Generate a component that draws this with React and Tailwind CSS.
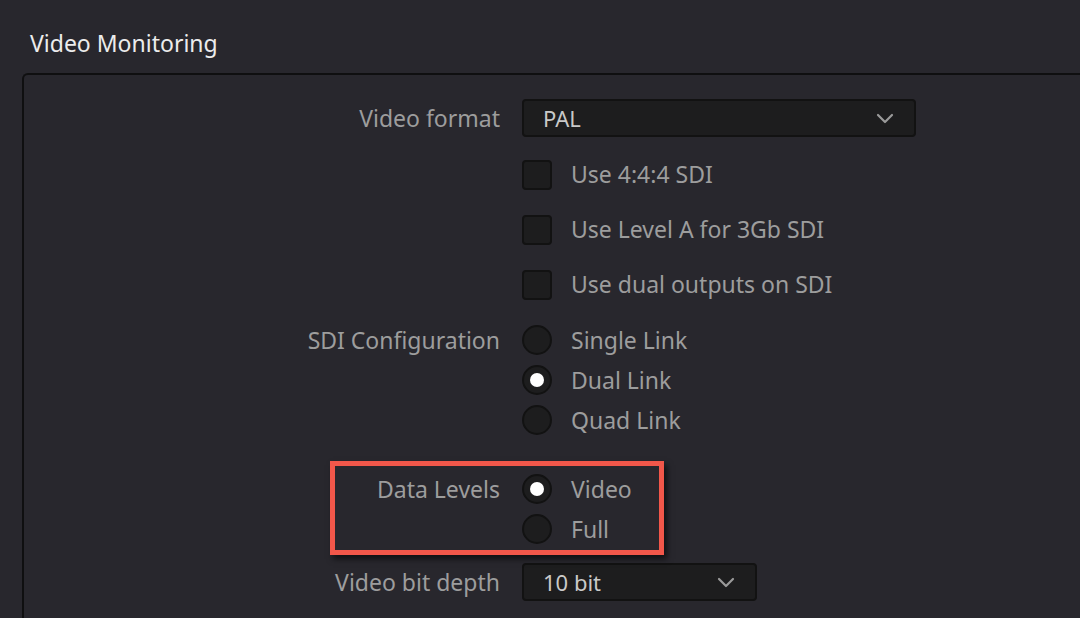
import React from "react";

function Chevron() {
  return (
    <svg width="18" height="11" viewBox="0 0 18 11" fill="none">
      <path d="M2 2 L9 9 L16 2" stroke="#9a9a9a" strokeWidth="2.2" strokeLinecap="round" strokeLinejoin="round" />
    </svg>
  );
}

function Dropdown({ value, width }) {
  return (
    <div
      className={`flex h-[38px] items-center justify-between rounded-[4px] border-2 border-[#121212] bg-[#1d1d1e] pl-[19px] pr-[20px] text-[22px] text-[#c9c9c9] ${width}`}
    >
      <span>{value}</span>
      <Chevron />
    </div>
  );
}

function Checkbox() {
  return <div className="h-[30px] w-[30px] shrink-0 rounded-[4px] border-2 border-[#121212] bg-[#1d1d1e]" />;
}

function Radio({ checked }) {
  return (
    <div className="flex h-[30px] w-[30px] shrink-0 items-center justify-center rounded-full border-2 border-[#121212] bg-[#1d1d1e]">
      {checked && <div className="h-[14px] w-[14px] rounded-full bg-white" />}
    </div>
  );
}

function Row({ label, children, className = "" }) {
  return (
    <div className={`flex items-center ${className}`}>
      <div className="w-[476px] shrink-0 text-right text-[23px] text-[#9d9d9d]">{label}</div>
      <div className="ml-[22px] flex items-center">{children}</div>
    </div>
  );
}

export default function App() {
  const font = { fontFamily: '"Noto Sans", "Open Sans", sans-serif' };
  return (
    <div className="relative h-[618px] w-[1080px] overflow-hidden bg-[#28272d]" style={font}>
      <div className="pl-[30px] pt-[27px] text-[23px] leading-[32px] text-[#ececec]">Video Monitoring</div>
      <div className="ml-[22px] mt-[14px] h-[700px] w-[1100px] rounded-tl-[6px] border-l-2 border-t-2 border-[#0f0f10]">
        <div className="pt-[24px]">
          <Row label="Video format" className="h-[38px]">
            <Dropdown value="PAL" width="w-[394px]" />
          </Row>

          <div className="mt-[10px]">
            {["Use 4:4:4 SDI", "Use Level A for 3Gb SDI", "Use dual outputs on SDI"].map((t) => (
              <Row key={t} label="" className="h-[55px]">
                <Checkbox />
                <span className="ml-[19px] text-[23px] text-[#9d9d9d]">{t}</span>
              </Row>
            ))}
          </div>

          <div className="mt-[8px]">
            {[
              ["SDI Configuration", "Single Link", false],
              ["", "Dual Link", true],
              ["", "Quad Link", false],
            ].map(([l, t, c]) => (
              <Row key={t} label={l} className="h-[40px]">
                <Radio checked={c} />
                <span className="ml-[19px] text-[23px] text-[#9d9d9d]">{t}</span>
              </Row>
            ))}
          </div>

          <div className="mt-[29px]">
            {[
              ["Data Levels", "Video", true],
              ["", "Full", false],
            ].map(([l, t, c]) => (
              <Row key={t} label={l} className="h-[40px]">
                <Radio checked={c} />
                <span className="ml-[19px] text-[23px] text-[#9d9d9d]">{t}</span>
              </Row>
            ))}
          </div>

          <Row label="Video bit depth" className="mt-[14px] h-[38px]">
            <Dropdown value="10 bit" width="w-[235px]" />
          </Row>
        </div>
      </div>

      <div className="absolute left-[330px] top-[461px] h-[94px] w-[334px] border-[5px] border-[#f2574a] shadow-[3px_4px_6px_rgba(0,0,0,0.6)]" />
    </div>
  );
}
